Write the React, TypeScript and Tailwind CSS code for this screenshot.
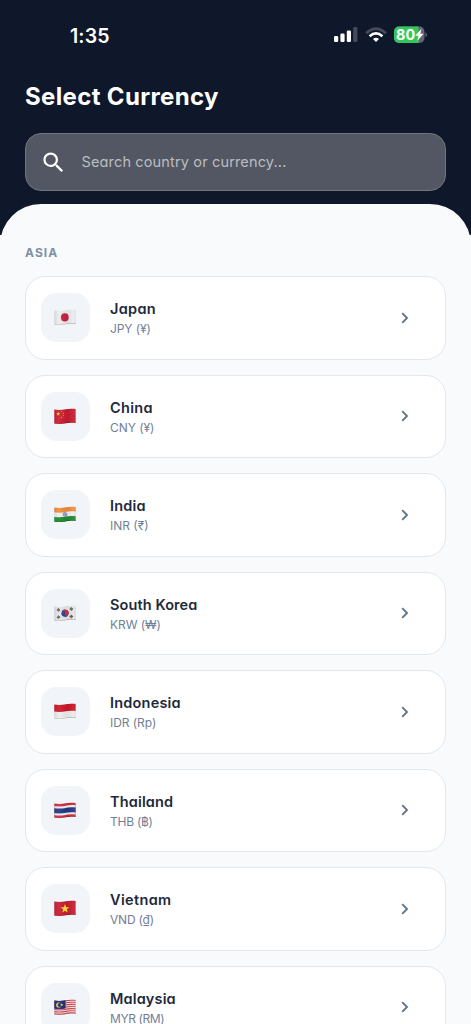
import React from "react";

type Country = {
  code: string;
  name: string;
  currency: string;
  nameStyle: string;
  currencyStyle: string;
};

const countries: Country[] = [
  { code: "jp", name: "Japan", currency: "JPY (¥)", nameStyle: "tracking-[0.3px]", currencyStyle: "tracking-[-0.1px]" },
  { code: "cn", name: "China", currency: "CNY (¥)", nameStyle: "tracking-[0.3px]", currencyStyle: "tracking-[-0.05px]" },
  { code: "in", name: "India", currency: "INR (₹)", nameStyle: "tracking-[0.2px]", currencyStyle: "tracking-[0px]" },
  { code: "kr", name: "South Korea", currency: "KRW (₩)", nameStyle: "tracking-[0.1px]", currencyStyle: "tracking-[-0.05px]" },
  { code: "id", name: "Indonesia", currency: "IDR (Rp)", nameStyle: "tracking-[0.2px]", currencyStyle: "tracking-[-0.05px]" },
  { code: "th", name: "Thailand", currency: "THB (฿)", nameStyle: "tracking-[0.15px]", currencyStyle: "tracking-[-0.25px]" },
  { code: "vn", name: "Vietnam", currency: "VND (₫)", nameStyle: "tracking-[0.35px]", currencyStyle: "tracking-[-0.2px]" },
  { code: "my", name: "Malaysia", currency: "MYR (RM)", nameStyle: "tracking-[0.15px]", currencyStyle: "tracking-[-0.4px]" },
];

const STAR = "M0 -1 L.24 -.31 L.95 -.31 L.38 .12 L.59 .81 L0 .39 L-.59 .81 L-.38 .12 L-.95 -.31 L-.24 -.31 Z";

/** A band following the flag's wave, from y to y + h. */
function Band({ y, h, fill }: { y: number; h: number; fill: string }) {
  return (
    <path
      d={`M-1 ${y + 1.4} C4 ${y + 2.4} 8 ${y + 2} 12 ${y + 1.3} S18 ${y + 0.4} 23 ${y + 1.1} V${y + h + 1.1} C18 ${y + h + 0.4} 16 ${y + h + 0.6} 12 ${y + h + 1.3} S4 ${y + h + 2.4} -1 ${y + h + 1.4} Z`}
      fill={fill}
    />
  );
}

function FlagArt({ code }: { code: string }) {
  switch (code) {
    case "jp":
      return (
        <>
          <Band y={0} h={14} fill="#ececec" />
          <ellipse cx="10.8" cy="8.4" rx="3.9" ry="4.1" fill="#c91f45" />
        </>
      );
    case "cn":
      return (
        <>
          <Band y={0} h={14} fill="#c91b2f" />
          <path d={STAR} transform="translate(4.2 6) scale(2.2)" fill="#fbd12b" />
          <path d={STAR} transform="translate(7.8 3.6) scale(.9)" fill="#f0b52b" />
          <path d={STAR} transform="translate(9.3 5.3) scale(.9)" fill="#f0b52b" />
          <path d={STAR} transform="translate(9.3 7.6) scale(.9)" fill="#f0b52b" />
          <path d={STAR} transform="translate(7.6 9.4) scale(.9)" fill="#f0b52b" />
        </>
      );
    case "in":
      return (
        <>
          <Band y={0} h={14} fill="#efefef" />
          <Band y={0} h={4.7} fill="#f28c3c" />
          <Band y={9.3} h={4.8} fill="#1f8a2b" />
          <circle cx="11" cy="8.4" r="1.9" fill="#b9bce0" stroke="#5a5fae" strokeWidth=".6" />
          <circle cx="11" cy="8.4" r=".5" fill="#3f459c" />
        </>
      );
    case "kr":
      return (
        <>
          <Band y={0} h={14} fill="#e6e6e6" />
          <g transform="rotate(25 11 8.3)">
            <circle cx="11" cy="8.3" r="3.6" fill="#20489a" />
            <path d="M7.4 8.3 A3.6 3.6 0 0 1 14.6 8.3 A1.8 1.8 0 0 1 11 8.3 A1.8 1.8 0 0 0 7.4 8.3" fill="#d02c3e" />
          </g>
          <g stroke="#3c3c3c" strokeWidth="2.8" strokeDasharray=".75 .25">
            <path d="M3.6 5.8 L5.5 4.1" />
            <path d="M16.3 3.2 L18.4 4.8" />
            <path d="M3.6 11.4 L5.5 13" />
            <path d="M16.3 12.4 L18.4 10.6" />
          </g>
        </>
      );
    case "id":
      return (
        <>
          <Band y={0} h={14} fill="#ececec" />
          <Band y={0} h={7} fill="#cc1626" />
        </>
      );
    case "th":
      return (
        <>
          <Band y={0} h={14} fill="#d0293a" />
          <Band y={2.4} h={9.2} fill="#eeeeef" />
          <Band y={4.6} h={4.9} fill="#1f3786" />
        </>
      );
    case "vn":
      return (
        <>
          <Band y={0} h={14} fill="#c91b2f" />
          <path d={STAR} transform="translate(11 8.8) scale(4.7)" fill="#fce035" />
        </>
      );
    default:
      return (
        <>
          <Band y={0} h={14} fill="#eeeaea" />
          {[0, 2.1, 4.2, 6.3, 8.4, 10.5, 12.6].map((y) => (
            <Band key={y} y={y} h={1.1} fill="#d4414c" />
          ))}
          <path d="M0 1.6 C4 2.4 8 2.1 11.5 1.3 V9.4 C8 10.2 4 10.5 0 9.7 Z" fill="#1c2b78" />
          <circle cx="4.7" cy="6" r="2.6" fill="#f5cf35" />
          <circle cx="5.7" cy="6" r="2.05" fill="#1c2b78" />
          <path d={STAR} transform="translate(7.8 5.9) scale(1.8)" fill="#f5cf35" />
        </>
      );
  }
}

function Flag({ code }: { code: string }) {
  const clip = `flag-${code}`;
  const shade = `shade-${code}`;
  return (
    <svg viewBox="0 0 22 17" className="mr-[1px] h-[17px] w-[22px]">
      <defs>
        <clipPath id={clip}>
          <rect x=".3" y="0" width="21.3" height="17" rx=".5" />
        </clipPath>
        <linearGradient id={shade} x1="0" x2="1" y1="0" y2="0">
          <stop offset="0" stopColor="#000" stopOpacity=".14" />
          <stop offset=".25" stopColor="#fff" stopOpacity=".08" />
          <stop offset=".6" stopColor="#000" stopOpacity=".05" />
          <stop offset=".85" stopColor="#fff" stopOpacity=".06" />
          <stop offset="1" stopColor="#000" stopOpacity=".2" />
        </linearGradient>
      </defs>
      <g clipPath={`url(#${clip})`}>
        <FlagArt code={code} />
        <Band y={0} h={14} fill={`url(#${shade})`} />
        <Band y={13.4} h={0.6} fill="#00000038" />
      </g>
    </svg>
  );
}

function StatusBar() {
  return (
    <div className="flex h-[70px] items-center justify-between pr-[43px] pl-[70px]">
      <span className="pt-[2px] text-[19.5px] leading-6 font-semibold tracking-[0.1px]">1:35</span>
      <div className="flex items-center">
        <svg viewBox="0 0 24 16" className="h-4 w-6">
          <rect x="0" y="9" width="4.2" height="6" rx="1.2" fill="#fff" />
          <rect x="6.4" y="6.6" width="4.2" height="8.4" rx="1.2" fill="#fff" />
          <rect x="12.8" y="3.6" width="4.2" height="11.4" rx="1.2" fill="#fff" />
          <rect x="19.2" y="0" width="4.2" height="15" rx="1.2" fill="#454a5b" />
        </svg>
        <svg viewBox="0 0 22 16" className="ml-[7px] h-4 w-[22px]" fill="none">
          <path d="M1.2 6.2 Q11 -2.6 20.8 6.2" stroke="#454a5b" strokeWidth="2.8" />
          <path d="M4.6 9.2 Q11 3.6 17.4 9.2" stroke="#fff" strokeWidth="2.8" />
          <path d="M8 11.9 Q11 9.4 14 11.9 L11 15 Z" fill="#fff" />
        </svg>
        <svg viewBox="0 0 34 18" className="ml-[7px] h-[18px] w-[34px]">
          <defs>
            <clipPath id="battery">
              <rect x="0" y=".5" width="30.5" height="16.5" rx="5" />
            </clipPath>
          </defs>
          <g clipPath="url(#battery)">
            <rect width="31" height="18" fill="#646675" />
            <rect width="24.5" height="18" fill="#34c759" />
          </g>
          <path d="M31.5 6 Q34.5 8.8 31.5 11.6 Z" fill="#646675" />
          <text x="2.1" y="14" fontSize="14.5" fontWeight="700" fill="#fff" textLength="19" lengthAdjust="spacingAndGlyphs">80</text>
          <path d="M27.4 2.8 L21.2 9.7 H24.4 L23.3 15 L29.6 7.7 H26.4 Z" fill="#fff" />
        </svg>
      </div>
    </div>
  );
}

function SearchField() {
  return (
    <div className="mx-[25px] mt-[20px] flex h-[58px] items-center rounded-[16px] border border-[#70757f] bg-[#525763] pl-[14px]">
      <svg viewBox="0 0 24 24" className="size-[27px]" fill="#fff">
        <path d="M15.5 14h-.79l-.28-.27A6.471 6.471 0 0 0 16 9.5 6.5 6.5 0 1 0 9.5 16c1.61 0 3.09-.59 4.23-1.57l.27.28v.79l5 4.99L20.49 19l-4.99-5zm-6 0C7.01 14 5 11.99 5 9.5S7.01 5 9.5 5 14 7.01 14 9.5 11.99 14 9.5 14z" />
      </svg>
      <span className="ml-[14.5px] text-[14.5px] leading-5 tracking-[0.15px] whitespace-nowrap text-[#bcbdc0]">
        Search country or currency...
      </span>
    </div>
  );
}

function CountryCard({ country }: { country: Country }) {
  return (
    <div className="flex h-[83.5px] shrink-0 items-center rounded-[20px] border border-[#e2e8f0] bg-white pr-[30.5px] pl-[15px]">
      <div className="flex size-[49px] items-center justify-center rounded-[15px] bg-[#f1f5f9]">
        <Flag code={country.code} />
      </div>
      <div className="ml-[20px] flex-1 pt-[1px] whitespace-nowrap">
        <div className={`text-[14.5px] leading-[21px] font-semibold text-[#1e293b] ${country.nameStyle}`}>{country.name}</div>
        <div className={`text-[12px] leading-[19px] text-[#718096] ${country.currencyStyle}`}>{country.currency}</div>
      </div>
      <svg viewBox="0 0 20 20" className="size-5" fill="none" stroke="#64748b" strokeWidth="1.9">
        <path d="M7.2 5.2 L12 10 L7.2 14.8" />
      </svg>
    </div>
  );
}

export default function App() {
  return (
    <div className="flex h-[1024px] flex-col overflow-hidden bg-[#f8fafc] font-['Inter',sans-serif] [font-feature-settings:'cv11']">
      <header className="h-[235px] shrink-0 bg-[#0f172a] text-white">
        <StatusBar />
        <h1 className="ml-[25px] pt-[11px] text-[24px] leading-8 font-bold tracking-[0.35px]">Select Currency</h1>
        <SearchField />
      </header>
      <main className="-mt-[31px] flex-1 rounded-t-[41px] bg-[#f8fafc] px-[25px] pt-[40px]">
        <h2 className="text-[12px] leading-[18px] font-bold tracking-[1.1px] text-[#8290a5]">ASIA</h2>
        <div className="mt-[14px] flex flex-col gap-[15px]">
          {countries.map((country) => (
            <CountryCard key={country.code} country={country} />
          ))}
        </div>
      </main>
    </div>
  );
}
